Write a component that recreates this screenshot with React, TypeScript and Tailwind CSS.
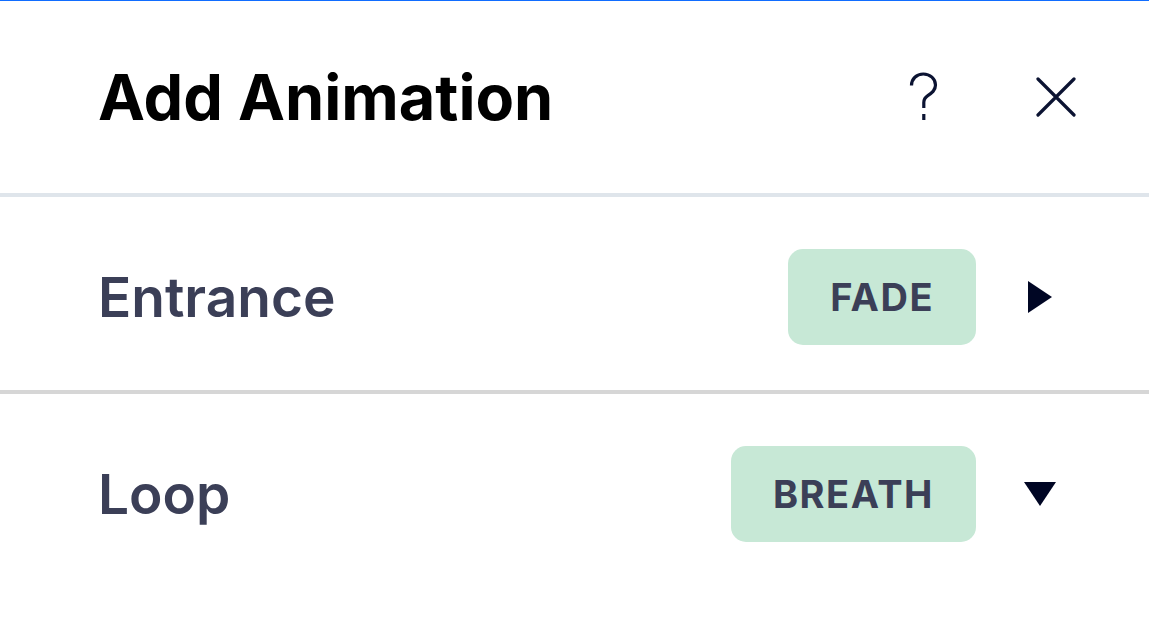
const rows = [
  { id: 1, label: "Entrance", value: "FADE", open: false },
  { id: 2, label: "Loop", value: "BREATH", open: true },
];

const HelpIcon = () => (
  <svg width="29" height="50" viewBox="0 0 29 50" fill="none">
    <path
      d="M2.5 13.5C2.5 6.8 7.6 2 14.3 2C21 2 26.5 6.6 26.5 13C26.5 18.6 22.6 21.2 18.8 23.6C16 25.4 14.8 27 14.8 30.5V36"
      stroke="#0b1332"
      strokeWidth="3.2"
      strokeLinecap="butt"
    />
    <rect x="13.2" y="42" width="3.2" height="6" fill="#0b1332" />
  </svg>
);

const CloseIcon = () => (
  <svg width="40" height="40" viewBox="0 0 40 40" fill="none">
    <path d="M2 2L38 38M38 2L2 38" stroke="#0b1332" strokeWidth="3.2" strokeLinecap="round" />
  </svg>
);

const Caret = ({ open }: { open: boolean }) =>
  open ? (
    <svg width="32" height="24" viewBox="0 0 32 24">
      <path d="M0 0H32L16 24Z" fill="#000624" />
    </svg>
  ) : (
    <svg width="24" height="32" viewBox="0 0 24 32">
      <path d="M0 0L24 16L0 32Z" fill="#000624" />
    </svg>
  );

const App = () => {
  return (
    <div
      className="w-full h-[636px] bg-white border-t border-[#116dff] overflow-hidden"
      style={{ fontFamily: "Inter, 'Noto Sans', sans-serif" }}
    >
      {/* Header */}
      <div className="flex items-center h-[192px] pl-[98px] pr-[73px]">
        <h1 className="text-[63px] font-bold text-black leading-none">
          Add Animation
        </h1>
        <div className="ml-auto flex items-center">
          <button className="w-[29px] h-[50px] flex items-center justify-center">
            <HelpIcon />
          </button>
          <button className="ml-[98px] w-[40px] h-[40px] flex items-center justify-center">
            <CloseIcon />
          </button>
        </div>
      </div>
      <div className="h-[4px] bg-[#dfe5eb]" />

      {rows.map((row, i) => (
        <div key={row.id}>
          {i > 0 && <div className="h-[4px] bg-[#d6d6d6]" />}
          <div className="flex items-center h-[193px] pt-[7px] pl-[98px] pr-[93px]">
            <span className="text-[55px] font-semibold text-[#3b3f57] leading-none">
              {row.label}
            </span>
            <span className="ml-auto h-[96px] px-[42px] flex items-center rounded-[15px] bg-[#c7e8d6] text-[38px] font-bold tracking-[0.04em] text-[#3b3f57]">
              {row.value}
            </span>
            <span className="ml-[48px] w-[32px] flex items-center justify-center">
              <Caret open={row.open} />
            </span>
          </div>
        </div>
      ))}
    </div>
  );
};

export default App;
